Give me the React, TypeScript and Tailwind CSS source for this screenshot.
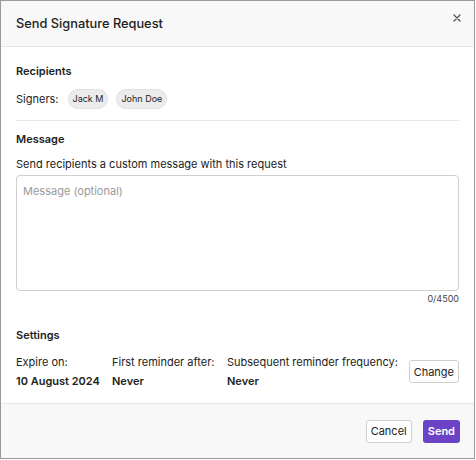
import React from "react";

export default function App() {
  return (
    <div
      className="w-[476px] h-[460px] bg-white text-[#222] overflow-hidden"
      style={{ fontFamily: "Inter, 'Noto Sans', sans-serif" }}
    >
      <div className="w-[475px] h-[459px] border border-[#9a9a9a] flex flex-col bg-white">
        {/* Header */}
        <div className="h-[46px] shrink-0 bg-[#f8f8f8] border-b border-[#e6e6e6] flex items-center justify-between pl-[15px] pr-[13px]">
          <div className="text-[12.8px] font-medium text-[#222] leading-[16px]">Send Signature Request</div>
          <svg width="8" height="8" viewBox="0 0 8 8" className="mt-[-12px]">
            <path d="M1 1L7 7M7 1L1 7" stroke="#555" strokeWidth="1.4" strokeLinecap="round" />
          </svg>
        </div>

        {/* Body */}
        <div className="flex-1 px-[15px] pt-[17px]">
          <div className="text-[11px] font-semibold leading-[14px]">Recipients</div>
          <div className="flex items-center mt-[11px] text-[11px] leading-[14px]">
            <span>Signers:</span>
            <span className="ml-[9px] rounded-full bg-[#ececec] border border-[#e0e0e0] px-[4px] h-[20px] flex items-center text-[9px]">Jack M</span>
            <span className="ml-[8px] rounded-full bg-[#ececec] border border-[#e0e0e0] px-[4px] h-[20px] flex items-center text-[9px]">John Doe</span>
          </div>
          <div className="h-px bg-[#e8e8e8] mt-[11px]" />

          <div className="text-[11px] font-semibold leading-[14px] mt-[11px]">Message</div>
          <div className="text-[11px] leading-[14px] mt-[11px]">Send recipients a custom message with this request</div>
          <div className="mt-[4px] h-[116px] border border-[#cfcfcf] rounded-[4px] px-[6px] pt-[8px] text-[11px] text-[#9a9a9a] leading-[14px]">
            Message (optional)
          </div>
          <div className="text-right text-[9px] text-[#444] leading-[12px] mt-[2px]">0/4500</div>

          <div className="text-[11px] font-semibold leading-[14px] mt-[23px]">Settings</div>
          <div className="flex items-start mt-[13px] text-[11px] leading-[14px]">
            <div className="w-[96px]">
              <div>Expire on:</div>
              <div className="font-semibold mt-[5px]">10 August 2024</div>
            </div>
            <div className="w-[115px]">
              <div>First reminder after:</div>
              <div className="font-semibold mt-[5px]">Never</div>
            </div>
            <div className="flex-1">
              <div>Subsequent reminder frequency:</div>
              <div className="font-semibold mt-[5px]">Never</div>
            </div>
            <div className="mt-[5px] h-[23px] px-[4px] border border-[#cfcfcf] rounded-[3px] flex items-center text-[11px]">Change</div>
          </div>
        </div>

        {/* Footer */}
        <div className="h-[55px] shrink-0 bg-[#f8f8f8] border-t border-[#e6e6e6] flex items-center justify-end gap-[11px] pr-[14px]">
          <div className="h-[23px] px-[4px] border border-[#cfcfcf] rounded-[3px] bg-white flex items-center text-[11px]">Cancel</div>
          <div className="h-[23px] px-[5px] rounded-[3px] bg-[#6a43c7] text-white font-semibold flex items-center text-[11px]">Send</div>
        </div>
      </div>
    </div>
  );
}
